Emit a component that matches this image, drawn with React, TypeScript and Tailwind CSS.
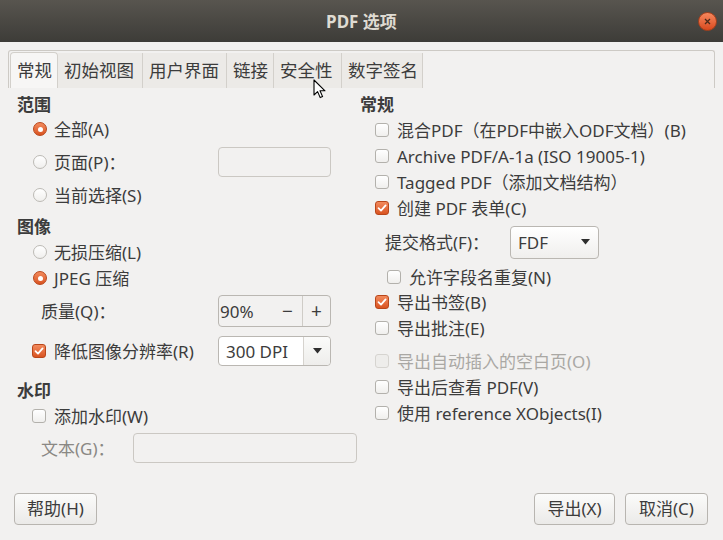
import React from 'react';

const font = { fontFamily: '"Noto Sans", "Noto Sans CJK SC", sans-serif' };

function Radio({ checked }: { checked?: boolean }) {
  if (checked) {
    return (
      <span className="w-[14px] h-[14px] rounded-full bg-gradient-to-b from-[#f28a5c] to-[#d9531f] border border-[#b9461a] flex items-center justify-center shrink-0">
        <span className="w-[5px] h-[5px] rounded-full bg-white" />
      </span>
    );
  }
  return <span className="w-[14px] h-[14px] rounded-full bg-gradient-to-b from-white to-[#f0efed] border border-[#bcbab5] shrink-0" />;
}

function Check({ checked, disabled }: { checked?: boolean; disabled?: boolean }) {
  if (checked) {
    return (
      <span className="w-[14px] h-[14px] rounded-[3px] bg-gradient-to-b from-[#f28a5c] to-[#d9531f] border border-[#b9461a] flex items-center justify-center shrink-0">
        <svg width="10" height="10" viewBox="0 0 10 10">
          <path d="M1.5 5.2 L4 7.6 L8.6 2.4" fill="none" stroke="white" strokeWidth="1.8" strokeLinecap="round" strokeLinejoin="round" />
        </svg>
      </span>
    );
  }
  if (disabled) {
    return <span className="w-[14px] h-[14px] rounded-[3px] bg-[#eeedeb] border border-[#d6d4d0] shrink-0" />;
  }
  return <span className="w-[14px] h-[14px] rounded-[3px] bg-gradient-to-b from-white to-[#f0efed] border border-[#b3b1ac] shrink-0" />;
}

function Heading({ children, className = '' }: { children: React.ReactNode; className?: string }) {
  return <div className={`h-[24px] flex items-center font-bold text-[17px] leading-none text-[#3c3c3c] ${className}`}>{children}</div>;
}

function Arrow() {
  return (
    <svg width="9" height="6" viewBox="0 0 9 6">
      <path d="M0 0 H9 L4.5 5.5 Z" fill="#2e2e2e" />
    </svg>
  );
}

function Button({ label, w }: { label: string; w: string }) {
  return (
    <button className={`${w} h-[32px] rounded-[4px] border border-[#b8b5b0] bg-gradient-to-b from-[#fbfbfa] to-[#ebeae8] text-[17px] leading-none text-[#3c3c3c] flex items-center justify-center pb-[1px]`}>
      {label}
    </button>
  );
}

const tabs = [
  { label: '常规', w: 'w-[48px]' },
  { label: '初始视图', w: 'w-[85px]' },
  { label: '用户界面', w: 'w-[84px]' },
  { label: '链接', w: 'w-[47px]' },
  { label: '安全性', w: 'w-[68px]' },
  { label: '数字签名', w: 'w-[81px]' },
];

export default function App() {
  return (
    <div style={font} className="relative w-[723px] h-[540px] bg-[#f2f1f0] flex flex-col overflow-hidden text-[#3c3c3c]">
      {/* Title bar */}
      <div className="h-[42px] shrink-0 bg-gradient-to-b from-[#58554f] to-[#3d3c38] flex items-center justify-center relative">
        <span className="text-[17px] font-bold text-[#dfdbd2] leading-none">PDF 选项</span>
        <span className="absolute right-[6px] top-[12px] w-[19px] h-[19px] rounded-full bg-gradient-to-b from-[#f5875c] to-[#d8481b] border border-[#a8401c] flex items-center justify-center">
          <svg width="7" height="7" viewBox="0 0 7 7">
            <path d="M1 1 L6 6 M6 1 L1 6" stroke="#4a2a1a" strokeWidth="1.3" />
          </svg>
        </span>
      </div>

      {/* Tab strip */}
      <div className="mt-[8px] mx-[8px] h-[38px] border border-[#cdcac5] border-b-0 rounded-t-[3px] flex items-end pl-[1px] shrink-0">
        {tabs.map((t, i) => (
          <div
            key={t.label}
            className={`${t.w} h-[35px] flex items-center pl-[6px] text-[17.5px] leading-none border-r border-[#d3d0cb] ${
              i === 0 ? 'bg-[#f7f6f5] border-l border-t rounded-t-[4px] h-[36px]' : 'bg-[#eceae7]'
            }`}
          >
            {t.label}
          </div>
        ))}
      </div>

      {/* Content */}
      <div className="flex mt-[4px] text-[17px] leading-none">
        {/* Left column */}
        <div className="w-[360px] pl-[17px] flex flex-col">
          <Heading>范围</Heading>
          <div className="h-[26px] flex items-center gap-[7px] pl-[16px]">
            <Radio checked />
            <span>全部(A)</span>
          </div>
          <div className="h-[40px] flex items-center pl-[16px]">
            <div className="w-[185px] flex items-center gap-[7px]">
              <Radio />
              <span>页面(P)：</span>
            </div>
            <div className="w-[113px] h-[30px] rounded-[4px] border border-[#cbc8c3] bg-[#f2f1f0]" />
          </div>
          <div className="h-[26px] flex items-center gap-[7px] pl-[16px]">
            <Radio />
            <span>当前选择(S)</span>
          </div>

          <Heading className="mt-[6px]">图像</Heading>
          <div className="h-[26px] mt-[1px] flex items-center gap-[7px] pl-[16px]">
            <Radio />
            <span>无损压缩(L)</span>
          </div>
          <div className="h-[26px] flex items-center gap-[7px] pl-[16px]">
            <Radio checked />
            <span>JPEG 压缩</span>
          </div>
          <div className="h-[40px] flex items-center pl-[24px]">
            <span className="w-[177px]">质量(Q)：</span>
            <div className="w-[113px] h-[32px] rounded-[4px] border border-[#bab7b2] bg-[#f2f1f0] flex items-stretch">
              <span className="flex-1 flex items-center pl-[1px]">90%</span>
              <span className="w-[29px] flex items-center justify-center text-[19px]">−</span>
              <span className="w-[28px] border-l border-[#cfccc7] flex items-center justify-center text-[19px]">+</span>
            </div>
          </div>
          <div className="h-[40px] flex items-center pl-[15px]">
            <div className="w-[186px] flex items-center gap-[8px]">
              <Check checked />
              <span>降低图像分辨率(R)</span>
            </div>
            <div className="w-[113px] h-[30px] rounded-[4px] border border-[#bab7b2] bg-white flex items-stretch">
              <span className="flex-1 flex items-center pl-[7px]">300 DPI</span>
              <span className="w-[27px] border-l border-[#d6d3ce] bg-gradient-to-b from-[#fbfbfa] to-[#eeedeb] rounded-r-[4px] flex items-center justify-center">
                <Arrow />
              </span>
            </div>
          </div>

          <Heading className="mt-[7px]">水印</Heading>
          <div className="h-[26px] mt-[1px] flex items-center gap-[8px] pl-[15px]">
            <Check />
            <span>添加水印(W)</span>
          </div>
          <div className="h-[38px] flex items-center pl-[24px]">
            <span className="w-[92px] text-[#8a8884]">文本(G)：</span>
            <div className="w-[224px] h-[30px] rounded-[4px] border border-[#cbc8c3] bg-[#f2f1f0]" />
          </div>
        </div>

        {/* Right column */}
        <div className="flex-1 flex flex-col">
          <Heading>常规</Heading>
          <div className="h-[26px] mt-[1px] flex items-center gap-[8px] pl-[15px]">
            <Check />
            <span>混合PDF（在PDF中嵌入ODF文档）(B)</span>
          </div>
          <div className="h-[26px] flex items-center gap-[8px] pl-[15px]">
            <Check />
            <span>Archive PDF/A-1a (ISO 19005-1)</span>
          </div>
          <div className="h-[26px] flex items-center gap-[8px] pl-[15px]">
            <Check />
            <span>Tagged PDF（添加文档结构）</span>
          </div>
          <div className="h-[26px] flex items-center gap-[8px] pl-[15px]">
            <Check checked />
            <span>创建 PDF 表单(C)</span>
          </div>
          <div className="h-[42px] flex items-center pl-[25px]">
            <span className="w-[125px]">提交格式(F)：</span>
            <div className="w-[89px] h-[33px] rounded-[4px] border border-[#bab7b2] bg-gradient-to-b from-white to-[#f0efed] flex items-center justify-between pl-[7px] pr-[8px]">
              <span>FDF</span>
              <Arrow />
            </div>
          </div>
          <div className="h-[26px] mt-[1px] flex items-center gap-[8px] pl-[27px]">
            <Check />
            <span>允许字段名重复(N)</span>
          </div>
          <div className="h-[24px] flex items-center gap-[8px] pl-[15px]">
            <Check checked />
            <span>导出书签(B)</span>
          </div>
          <div className="h-[26px] mt-[1px] flex items-center gap-[8px] pl-[15px]">
            <Check />
            <span>导出批注(E)</span>
          </div>
          <div className="h-[26px] mt-[7px] flex items-center gap-[8px] pl-[15px]">
            <Check disabled />
            <span className="text-[#aaa8a4]">导出自动插入的空白页(O)</span>
          </div>
          <div className="h-[26px] flex items-center gap-[8px] pl-[15px]">
            <Check />
            <span>导出后查看 PDF(V)</span>
          </div>
          <div className="h-[26px] flex items-center gap-[8px] pl-[15px]">
            <Check />
            <span>使用 reference XObjects(I)</span>
          </div>
        </div>
      </div>

      {/* Footer */}
      <div className="mt-auto mb-[15px] px-[14px] flex items-center">
        <Button label="帮助(H)" w="w-[83px]" />
        <div className="flex-1" />
        <div className="flex gap-[10px] pr-[1px]">
          <Button label="导出(X)" w="w-[81px]" />
          <Button label="取消(C)" w="w-[83px]" />
        </div>
      </div>

      {/* Mouse pointer */}
      <svg className="absolute left-[313px] top-[79px]" width="14" height="21" viewBox="0 0 14 21">
        <path d="M1 1 L1 16 L4.6 12.6 L7.2 18.6 L9.6 17.6 L7 11.8 L12 11.8 Z" fill="white" stroke="black" strokeWidth="1.1" strokeLinejoin="round" />
      </svg>
    </div>
  );
}
